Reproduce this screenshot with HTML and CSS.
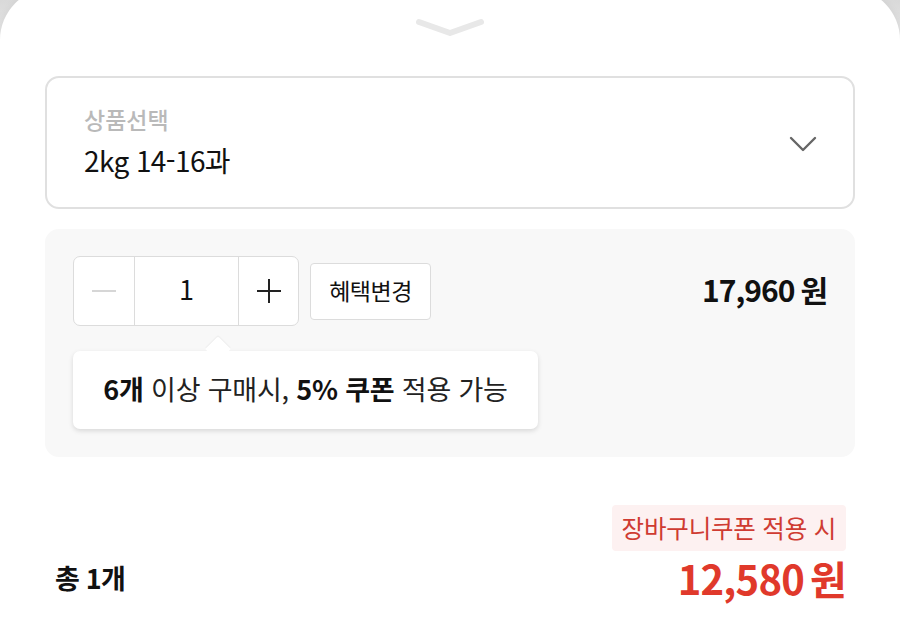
FILE: index.html
```html
<!DOCTYPE html>
<html lang="ko">
<head>
<meta charset="utf-8">
<link rel="stylesheet" href="styles.css">
</head>
<body>
<div class="sheet">
  <div class="handle">
    <svg width="72" height="22" viewBox="0 0 72 22"><path d="M5 6 L36 17 L67 6" fill="none" stroke="#e8e8e8" stroke-width="6" stroke-linecap="round" stroke-linejoin="round"/></svg>
  </div>
  <div class="select">
    <div class="select-text">
      <div class="select-label">상품선택</div>
      <div class="select-value">2kg 14-16과</div>
    </div>
    <svg class="select-chev" width="28" height="18" viewBox="0 0 28 18"><path d="M2 3 L14 15 L26 3" fill="none" stroke="#666" stroke-width="2.4" stroke-linecap="round" stroke-linejoin="round"/></svg>
  </div>
  <div class="panel">
    <div class="row">
      <div class="stepper">
        <div class="cell minus"><svg width="26" height="4" viewBox="0 0 26 4"><path d="M1 2 H25" stroke="#c8c8c8" stroke-width="1.6"/></svg></div>
        <div class="cell num">1</div>
        <div class="cell plus"><svg width="26" height="26" viewBox="0 0 26 26"><path d="M1 13 H25 M13 1 V25" stroke="#222" stroke-width="2"/></svg></div>
      </div>
      <div class="benefit">혜택변경</div>
      <div class="price">17,960<span class="won">원</span></div>
    </div>
    <div class="tooltip">
      <span class="tip-arrow"></span>
      <span class="tip-text"><b>6개</b> 이상 구매시, <b>5% 쿠폰</b> 적용 가능</span>
    </div>
  </div>
  <div class="total">
    <div class="total-count">총 1개</div>
    <div class="total-right">
      <div class="badge">장바구니쿠폰 적용 시</div>
      <div class="total-price">12,580<span class="won">원</span></div>
    </div>
  </div>
</div>
</body>
</html>
```
FILE: styles.css
```css
* { box-sizing: border-box; }
html, body { margin: 0; padding: 0; }
body {
  background: linear-gradient(#d9d9d9, #ececec 60px, #f2f2f2);
  width: 900px;
  height: 626px;
  overflow: hidden;
  font-family: "Noto Sans CJK KR", "Noto Sans", sans-serif;
  color: #111;
}
.sheet {
  margin-top: -12px;
  height: 660px;
  background: #fff;
  border-radius: 52px 52px 0 0;
  padding: 28px 45px 0 45px;
  box-shadow: 0 0 8px rgba(0,0,0,0.05);
}
.handle {
  display: flex;
  justify-content: center;
  height: 24px;
  margin-bottom: 36px;
}
.select {
  height: 133px;
  border: 2px solid #e0e0e0;
  border-radius: 14px;
  display: flex;
  align-items: center;
  justify-content: space-between;
  padding: 0 36px 0 37px;
}
.select-text { display: flex; flex-direction: column; }
.select-label {
  font-size: 23px;
  color: #b9b9b9;
  font-weight: 500;
  line-height: 30px;
  margin-top: -4px;
}
.select-value {
  font-size: 28px;
  color: #111;
  line-height: 36px;
  margin-top: 8px;
  letter-spacing: -0.6px;
}
.select-chev { margin-top: 2px; }
.panel {
  margin-top: 20px;
  height: 228px;
  background: #f8f8f8;
  border-radius: 14px;
  padding: 27px 28px 0 28px;
}
.row {
  display: flex;
  align-items: center;
  height: 70px;
}
.stepper {
  display: flex;
  height: 70px;
  border: 1.5px solid #dcdcdc;
  border-radius: 7px;
  background: #fff;
  overflow: hidden;
}
.cell {
  display: flex;
  align-items: center;
  justify-content: center;
  height: 100%;
}
.minus { width: 61px; border-right: 1.5px solid #dcdcdc; }
.num { width: 104px; border-right: 1.5px solid #dcdcdc; font-size: 27px; color: #111; padding-bottom: 6px; }
.plus { width: 59px; }
.benefit {
  margin-left: 11px;
  height: 57px;
  width: 121px;
  border: 1.5px solid #dcdcdc;
  border-radius: 4px;
  background: #fff;
  display: flex;
  align-items: center;
  justify-content: center;
  font-size: 23px;
  color: #111;
  letter-spacing: -0.5px;
  padding-bottom: 2px;
}
.price {
  margin-left: auto;
  margin-right: 0;
  font-size: 30px;
  font-weight: 700;
  letter-spacing: -1px;
  padding-bottom: 4px;
}
.won { margin-left: 6px; }
.tooltip {
  position: relative;
  margin-top: 25px;
  width: 465px;
  height: 78px;
  background: #fff;
  border-radius: 7px;
  box-shadow: 0 2px 5px rgba(0,0,0,0.13);
  display: flex;
  align-items: center;
  justify-content: center;
}
.tip-text {
  font-size: 27px;
  color: #222;
  white-space: nowrap;
  letter-spacing: -0.2px;
  padding-bottom: 4px;
}
.tip-text b { font-weight: 700; color: #111; }
.tip-arrow {
  position: absolute;
  top: -11px;
  left: 136px;
  width: 18px;
  height: 18px;
  background: #fff;
  transform: rotate(45deg);
  border-radius: 2px 0 0 0;
  box-shadow: -1px -1px 1px rgba(0,0,0,0.04);
}
.total {
  display: flex;
  justify-content: space-between;
  align-items: flex-end;
  margin-top: 48px;
  padding: 0 9px 0 10px;
}
.total-count {
  font-size: 27px;
  font-weight: 700;
  margin-bottom: 8px;
  letter-spacing: -0.8px;
}
.total-right {
  display: flex;
  flex-direction: column;
  align-items: flex-end;
}
.badge {
  background: #fdf1f1;
  color: #cf3b32;
  font-size: 24.5px;
  height: 46px;
  padding: 0 10px 2px;
  display: flex;
  align-items: center;
  border-radius: 4px;
  letter-spacing: -0.2px;
}
.total-price {
  margin-top: 0;
  color: #e0392b;
  font-size: 40px;
  font-weight: 700;
  line-height: 54px;
  letter-spacing: -0.8px;
}
```
